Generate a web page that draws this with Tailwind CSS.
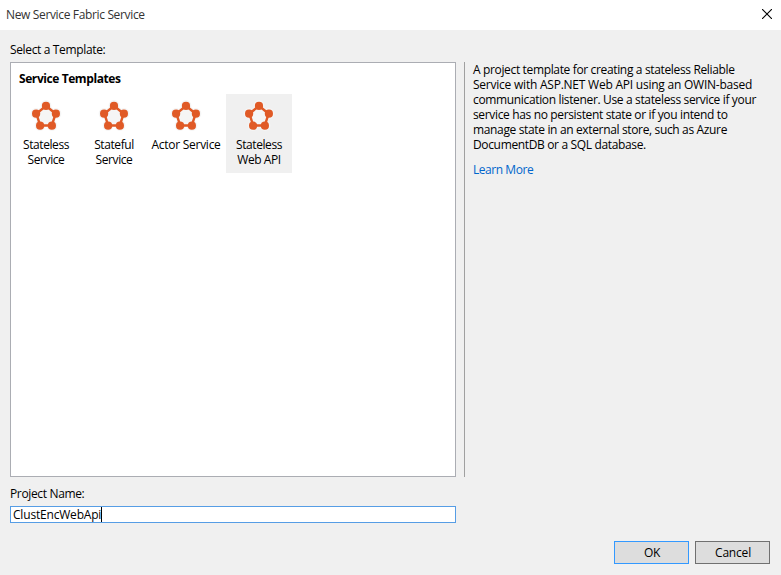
<!DOCTYPE html>
<html lang="en">
<head>
<meta charset="utf-8">
<title>New Service Fabric Service</title>
<script src="https://cdn.jsdelivr.net/npm/@tailwindcss/browser@4"></script>
</head>
<body class="flex h-[575px] w-[781px] flex-col overflow-hidden bg-[#f0f0f0] font-['Open_Sans','Noto_Sans',sans-serif] text-[12px] leading-[15px] tracking-[-0.35px] text-black">
<svg class="hidden">
  <symbol id="fabric" viewBox="0 0 32 32">
    <g fill="#f5f5f5" stroke="#f5f5f5" stroke-width="3" stroke-linejoin="round">
      <path d="M16 5 6 13l4 12.5h12L26 13z"/>
      <circle cx="16" cy="5.5" r="3.9"/><circle cx="6" cy="13.5" r="3.9"/><circle cx="26" cy="13.5" r="3.9"/><circle cx="10" cy="25.5" r="3.9"/><circle cx="22" cy="25.5" r="3.9"/>
    </g>
    <path d="M16 5.9 6.4 13.7l3.8 11.8h11.6l3.8-11.8z" fill="none" stroke="#e05a26" stroke-width="2.4"/>
    <g fill="#e05a26">
      <circle cx="16" cy="5.9" r="4.1"/><circle cx="6.1" cy="13.7" r="4.1"/><circle cx="25.9" cy="13.7" r="4.1"/><circle cx="10.1" cy="25.7" r="4.1"/><circle cx="21.9" cy="25.7" r="4.1"/>
    </g>
  </symbol>
</svg>
<header class="flex h-[30px] shrink-0 items-center justify-between bg-white pr-[9px] pl-[6px]">
  <h1 class="pb-px text-[#333]">New Service Fabric Service</h1>
  <svg class="mt-[-2px] size-[10px]" viewBox="0 0 10 10" stroke="#000" stroke-width="1.1"><path d="M0 0l10 10M10 0 0 10"/></svg>
</header>
<div class="flex h-[32px] shrink-0 items-center pt-[7px] pl-[10px]">Select a Template:</div>
<main class="flex h-[415px] shrink-0 pl-[10px]">
  <section class="w-[446px] border border-[#abadb3] bg-white px-[8px] pt-[8px]">
    <h2 class="font-bold tracking-[-0.42px]">Service Templates</h2>
    <div class="flex pt-[8px] text-center tracking-[-0.42px]">
      <div class="-ml-[6px] flex h-[79px] w-[66px] flex-col items-center pt-[6px]"><svg class="mb-[5px] size-[32px]"><use href="#fabric"/></svg>Stateless<br>Service</div>
      <div class="ml-[2px] flex h-[79px] w-[66px] flex-col items-center pt-[6px]"><svg class="mb-[5px] size-[32px]"><use href="#fabric"/></svg>Stateful<br>Service</div>
      <div class="flex h-[79px] w-[78px] flex-col items-center pt-[6px] tracking-[-0.26px] whitespace-nowrap"><svg class="mb-[5px] size-[32px]"><use href="#fabric"/></svg>Actor Service</div>
      <div class="ml-px flex h-[79px] w-[66px] flex-col items-center bg-[#f0f0f0] pt-[6px]"><svg class="mb-[5px] size-[32px]"><use href="#fabric"/></svg>Stateless<br>Web API</div>
    </div>
  </section>
  <aside class="ml-[8px] border-l border-[#a0a0a0] pl-[8px] whitespace-nowrap">
    <p>A project template for creating a stateless Reliable<br><span class="tracking-[-0.23px]">Service with ASP.NET Web API using an OWIN-based</span><br>communication listener. Use a stateless service if your<br>service has no persistent state or if you intend to<br><span class="tracking-[-0.35px]">manage state in an external store, such as Azure<br>DocumentDB or a SQL database.</span></p>
    <a class="mt-[10px] block tracking-[-0.45px] text-[#0066cc]">Learn More</a>
  </aside>
</main>
<label class="mt-[9px] ml-[10px] h-[20px] shrink-0">Project Name:</label>
<div class="ml-[10px] flex h-[17px] w-[446px] shrink-0 items-center border border-[#569de5] bg-white pl-[2px] tracking-[-0.19px]"><span>ClustEncWebApi</span><span class="h-[15px] w-px bg-black"></span></div>
<footer class="mt-[18px] flex justify-end gap-[6px] pr-[11px]">
  <button class="h-[23px] w-[75px] border border-[#3399ff] bg-[#dddddd] pl-px">OK</button>
  <button class="h-[23px] w-[75px] border border-[#707070] bg-[#dddddd] pl-px tracking-[-0.19px]">Cancel</button>
</footer>
</body>
</html>
